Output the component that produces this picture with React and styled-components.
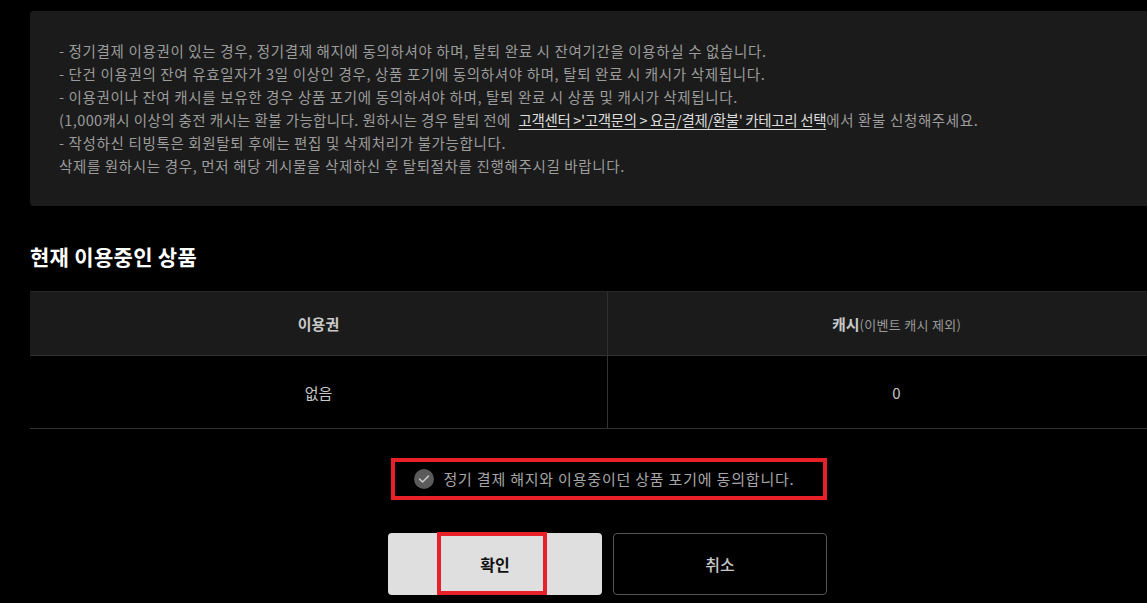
import React from "react";
import styled, { createGlobalStyle } from "styled-components";

const Global = createGlobalStyle`
  html, body { margin: 0; padding: 0; background: #000; overflow: hidden; }
  body { font-family: "Noto Sans CJK KR", "Noto Sans", sans-serif; }
`;

const Page = styled.div`
  width: 1155px;
  margin-left: 30px;
  padding-top: 11px;
`;

const Notice = styled.div`
  background: #1b1b1b;
  border-radius: 4px;
  padding: 28px 29px 29px;
  color: #9c9c9c;
  font-size: 14.5px;
  line-height: 23px;
  letter-spacing: 0.65px;
`;

const Line = styled.p`
  margin: 0;
  white-space: nowrap;
`;

const Narrow = styled.span`
  letter-spacing: 0.4px;
`;

const Link = styled.a`
  color: #dcdcdc;
  text-decoration: underline;
  text-underline-offset: 3px;
  margin-left: 4px;
  letter-spacing: -0.35px;
`;

const Heading = styled.h2`
  margin: 36px 0 0;
  color: #fff;
  font-size: 21px;
  font-weight: 700;
  line-height: 28px;
  letter-spacing: 0.3px;
`;

const Table = styled.table`
  width: 100%;
  margin-top: 21px;
  border-collapse: collapse;
  table-layout: fixed;
`;

const Th = styled.th`
  height: 63px;
  padding: 0;
  background: #1b1b1b;
  border-top: 1px solid #262626;
  border-bottom: 1px solid #333;
  color: #c8c8c8;
  font-size: 15px;
  font-weight: 700;
  text-align: center;
  & + & { border-left: 1px solid #303030; }
`;

const Sub = styled.span`
  font-size: 13px;
  font-weight: 400;
  color: #9a9a9a;
  letter-spacing: 0.3px;
`;

const Td = styled.td`
  height: 72px;
  padding: 0;
  border-bottom: 1px solid #333;
  color: #c8c8c8;
  font-size: 15px;
  text-align: center;
  & + & { border-left: 1px solid #333; }
`;

const AgreeRow = styled.div`
  position: relative;
  margin-top: 29px;
  height: 42px;
  display: flex;
  justify-content: center;
  align-items: center;
`;

const Frame = styled.div`
  position: absolute;
  border: 4px solid #e8202a;
  box-sizing: border-box;
  pointer-events: none;
`;

const AgreeFrame = styled(Frame)`
  top: 0;
  left: calc(50% - 217px);
  width: 436px;
  height: 42px;
`;

const Agree = styled.label`
  display: flex;
  align-items: center;
  gap: 9px;
  color: #a6a6a6;
  font-size: 15px;
  line-height: 20px;
  letter-spacing: 0.8px;
  cursor: pointer;
  margin-left: -6px;
`;

const Buttons = styled.div`
  margin-top: 33px;
  display: flex;
  justify-content: center;
  gap: 11px;
`;

const Button = styled.button`
  position: relative;
  width: 214px;
  height: 62px;
  border-radius: 4px;
  font-family: inherit;
  font-size: 16px;
  cursor: pointer;
  background: ${(p) => (p.$primary ? "#dfdfdf" : "transparent")};
  color: ${(p) => (p.$primary ? "#111" : "#c8c8c8")};
  font-weight: ${(p) => (p.$primary ? 700 : 500)};
  border: ${(p) => (p.$primary ? "none" : "1px solid #555")};
`;

const ButtonFrame = styled(Frame)`
  top: -1px;
  left: 49px;
  width: 110px;
  height: 63px;
`;

function CheckIcon() {
  return (
    <svg width="20" height="20" viewBox="0 0 20 20">
      <circle cx="10" cy="10" r="10" fill="#5b5b5b" />
      <path d="M5.6 10.2 L8.6 13 L14.4 7.2" fill="none" stroke="#c4c4c4" strokeWidth="1.7" strokeLinecap="round" strokeLinejoin="round" />
    </svg>
  );
}

export default function App() {
  return (
    <>
      <Global />
      <Page>
        <Notice>
          <Line>- 정기결제 이용권이 있는 경우, 정기결제 해지에 동의하셔야 하며, 탈퇴 완료 시 잔여기간을 이용하실 수 없습니다.</Line>
          <Line>- 단건 이용권의 잔여 유효일자가 3일 이상인 경우, 상품 포기에 동의하셔야 하며, 탈퇴 완료 시 캐시가 삭제됩니다.</Line>
          <Line>- 이용권이나 잔여 캐시를 보유한 경우 상품 포기에 동의하셔야 하며, 탈퇴 완료 시 상품 및 캐시가 삭제됩니다.</Line>
          <Line>
            <Narrow>(1,000캐시 이상의 충전 캐시는 환불 가능합니다. 원하시는 경우 탈퇴 전에 </Narrow>
            <Link>고객센터 &gt;'고객문의 &gt; 요금/결제/환불' 카테고리 선택</Link>에서 환불 신청해주세요.
          </Line>
          <Line>- 작성하신 티빙톡은 회원탈퇴 후에는 편집 및 삭제처리가 불가능합니다.</Line>
          <Line>삭제를 원하시는 경우, 먼저 해당 게시물을 삭제하신 후 탈퇴절차를 진행해주시길 바랍니다.</Line>
        </Notice>

        <Heading>현재 이용중인 상품</Heading>

        <Table>
          <thead>
            <tr>
              <Th>이용권</Th>
              <Th>
                캐시<Sub>(이벤트 캐시 제외)</Sub>
              </Th>
            </tr>
          </thead>
          <tbody>
            <tr>
              <Td>없음</Td>
              <Td>0</Td>
            </tr>
          </tbody>
        </Table>

        <AgreeRow>
          <Agree>
            <CheckIcon />
            정기 결제 해지와 이용중이던 상품 포기에 동의합니다.
          </Agree>
          <AgreeFrame />
        </AgreeRow>

        <Buttons>
          <Button $primary>
            확인
            <ButtonFrame />
          </Button>
          <Button>취소</Button>
        </Buttons>
      </Page>
    </>
  );
}
